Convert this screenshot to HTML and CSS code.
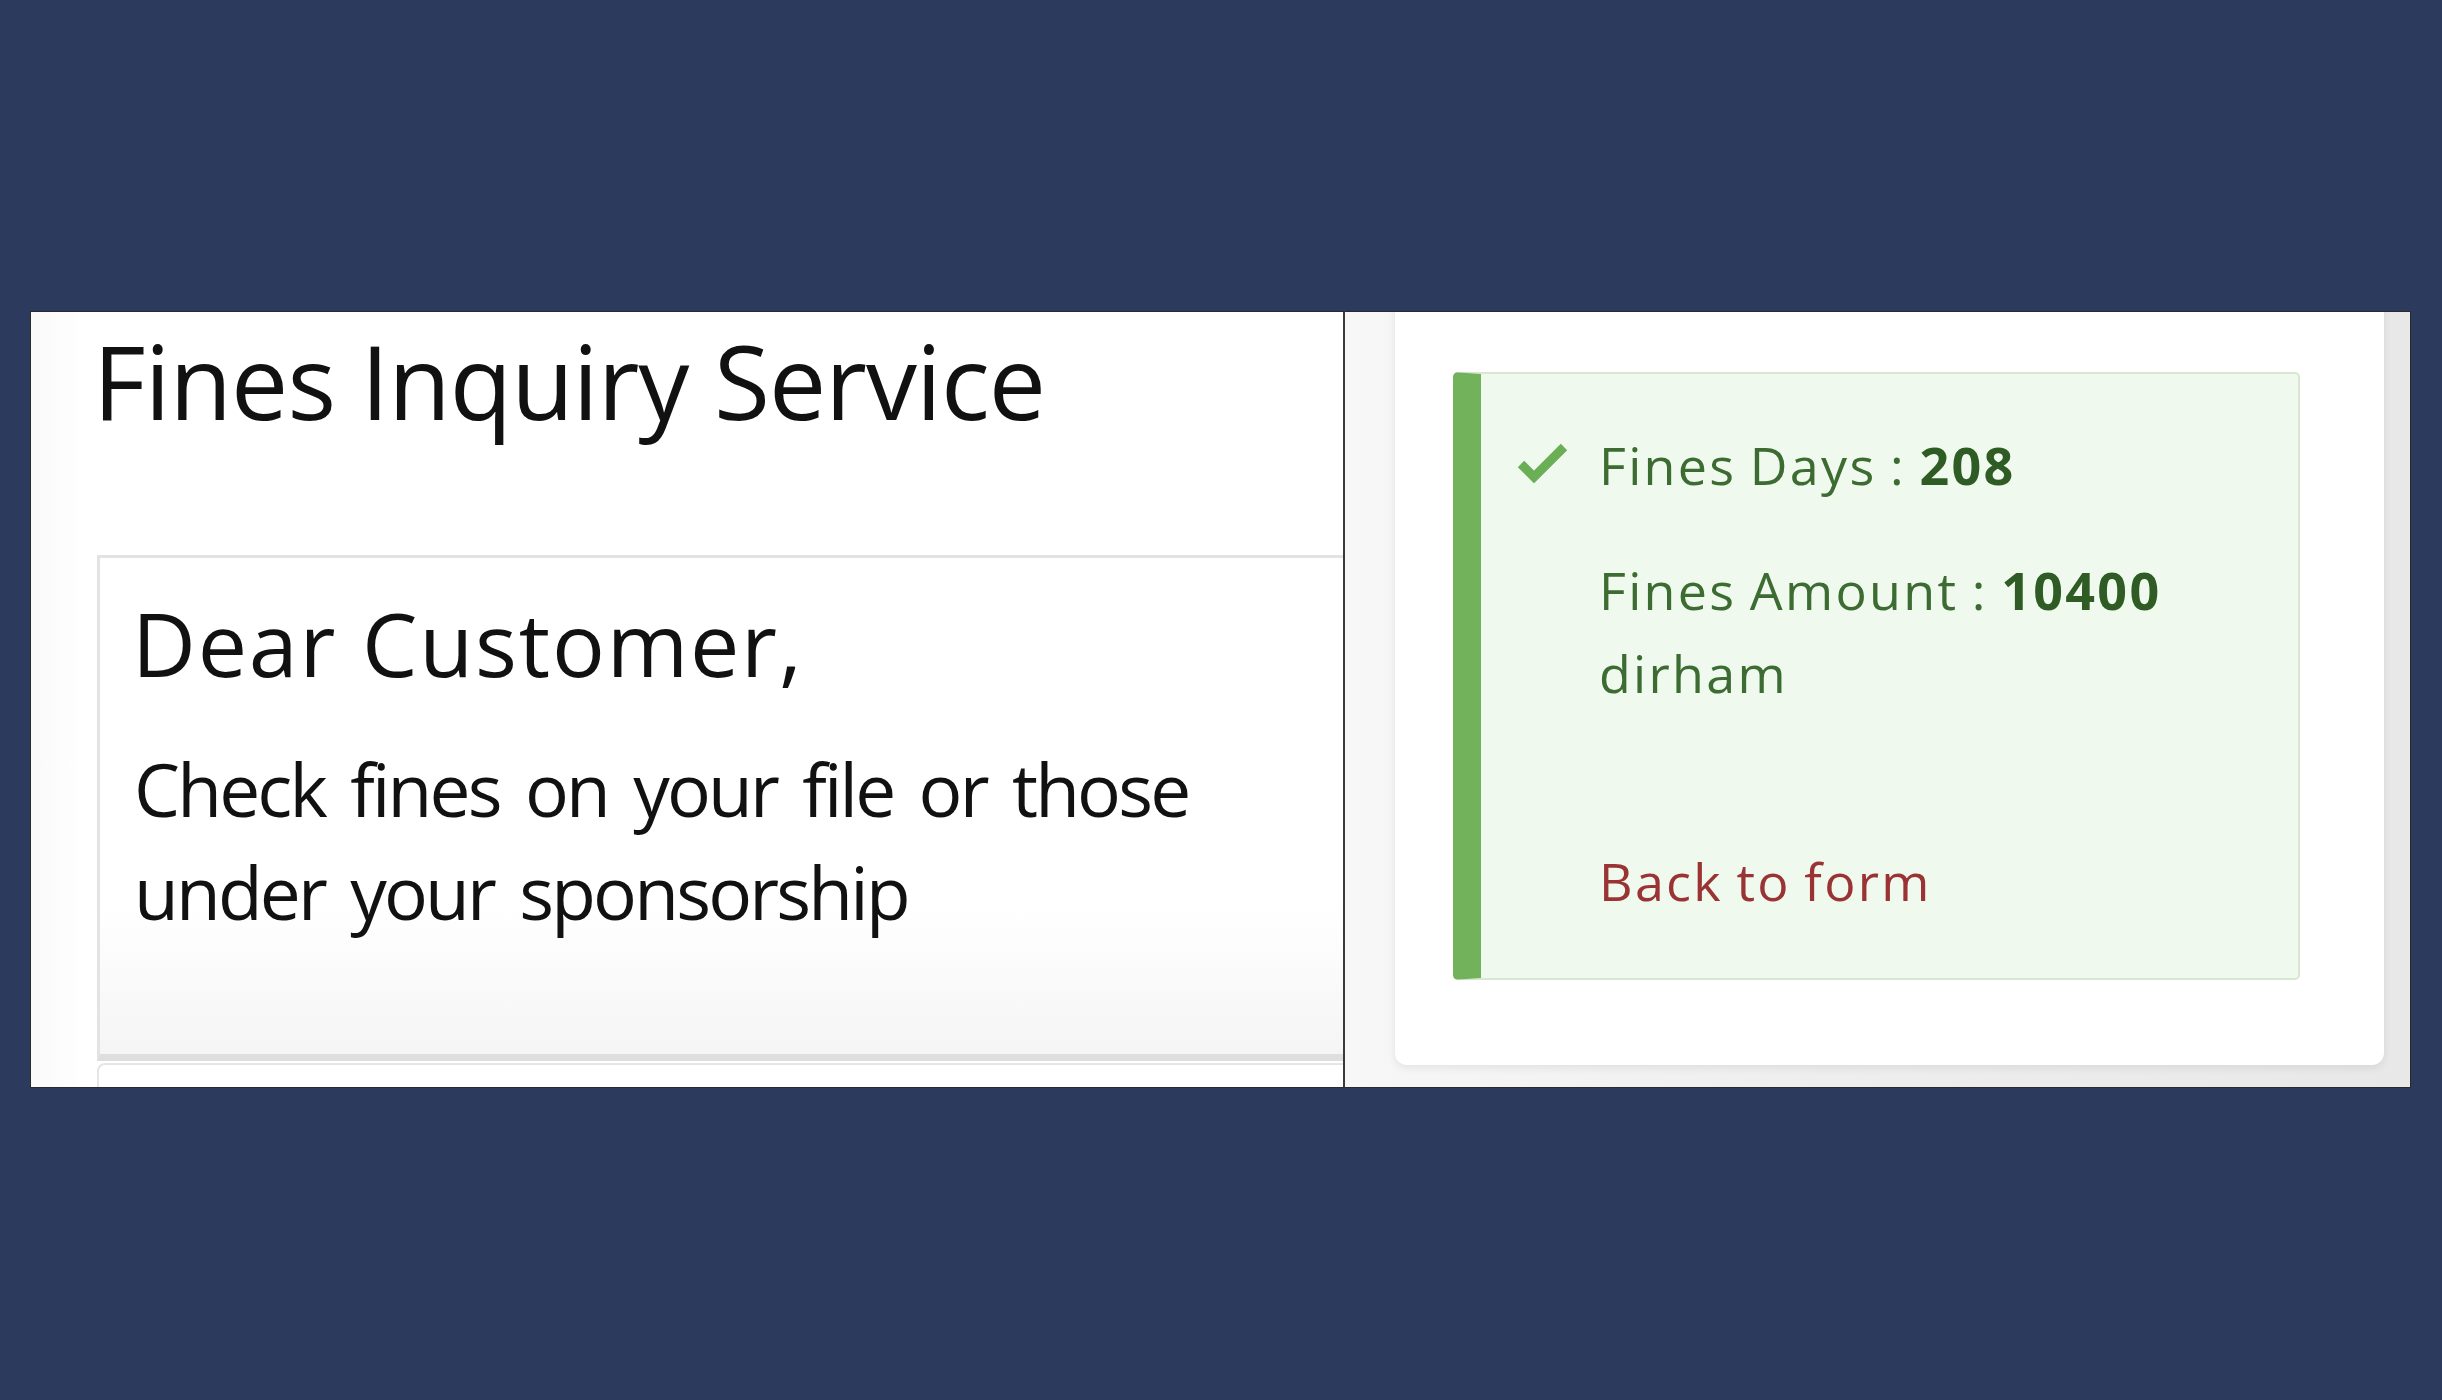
FILE: index.html
```html
<!DOCTYPE html>
<html lang="en">
<head>
<meta charset="utf-8">
<title>Fines Inquiry Service</title>
<link rel="stylesheet" href="styles.css">
</head>
<body>
<div class="stage">
  <section class="shot shot-left">
    <h1 class="title">Fines Inquiry Service</h1>
    <div class="card">
      <h2 class="greet">Dear Customer,</h2>
      <p class="lead">Check fines on your file or those under your sponsorship</p>
    </div>
    <div class="card card-next"></div>
  </section>
  <section class="shot shot-right">
    <div class="result-card">
      <div class="alert">
        <svg class="check" width="52" height="40" viewBox="0 0 52 40" aria-hidden="true">
          <polyline points="4,21 17,34 47,4" fill="none" stroke="#6aae56" stroke-width="9" stroke-linejoin="miter"/>
        </svg>
        <div class="alert-body">
          <p class="line">Fines Days : <b>208</b></p>
          <p class="line line-2">Fines Amount : <b>10400</b> dirham</p>
          <a class="back" href="#">Back to form</a>
        </div>
      </div>
    </div>
  </section>
</div>
</body>
</html>
```

FILE: styles.css
```css
html, body {
  margin: 0;
  padding: 0;
}
body {
  background: #2c3a5d;
  width: 2442px;
  height: 1400px;
  overflow: hidden;
  font-family: "Open Sans", "DejaVu Sans", sans-serif;
}
.stage {
  display: flex;
  padding: 311px 0 0 30px;
}
.shot {
  box-sizing: border-box;
  height: 777px;
  border: 1px solid #2a2a2a;
  overflow: hidden;
}
.shot-left {
  width: 1315px;
  background: linear-gradient(to right, #fafafa 0px, #ffffff 60px);
  display: flex;
  flex-direction: column;
  padding-left: 66px;
  border-right: 2px solid #3a3a3a;
}
.title {
  margin: 8px 0 0 -4px;
  font-size: 102px;
  line-height: 1.2;
  font-weight: 400;
  letter-spacing: -0.95px;
  color: #111111;
  white-space: nowrap;
}
.card {
  flex: 0 0 auto;
  width: 1320px;
  box-sizing: border-box;
  margin-top: 113px;
  border: 3px solid #e3e3e3;
  border-bottom: 7px solid #dedede;
  border-right: none;
  padding: 33px 0 111px 32px;
  background: linear-gradient(to bottom, #ffffff 0%, #ffffff 70%, #f5f5f5 100%);
}
.greet {
  margin: 0;
  font-size: 88px;
  line-height: 1.2;
  font-weight: 400;
  letter-spacing: 1.8px;
  color: #111111;
}
.lead {
  margin: 40px 0 0 2px;
  width: 1100px;
  font-size: 73px;
  line-height: 103px;
  letter-spacing: -2.8px;
  word-spacing: 9px;
  color: #111111;
}
.card-next {
  margin-top: 2px;
  height: 60px;
  padding: 0;
  border: 2px solid #e6e6e6;
  border-right: none;
  border-bottom: none;
  border-top-left-radius: 8px;
  background: #ffffff;
}
.shot-right {
  width: 1066px;
  border-left: none;
  background: linear-gradient(to right, #f7f7f7 0%, #eeeeee 45%, #e8e8e8 100%);
  padding: 0 26px 0 50px;
  display: flex;
  flex-direction: column;
}
.result-card {
  margin-top: -20px;
  height: 773px;
  box-sizing: border-box;
  background: #ffffff;
  border-radius: 12px;
  box-shadow: 0 3px 8px rgba(0, 0, 0, 0.08);
  padding: 80px 84px 0 58px;
}
.alert {
  box-sizing: border-box;
  height: 608px;
  display: flex;
  align-items: flex-start;
  background: #f0f9ee;
  border: 2px solid #d8e6d3;
  border-left: 28px solid #72b25a;
  border-radius: 5px;
  padding: 49px 40px 0 36px;
}
.check {
  flex: 0 0 auto;
  margin-top: 20px;
  margin-right: 30px;
}
.alert-body {
  display: flex;
  flex-direction: column;
  align-items: flex-start;
}
.line {
  margin: 0;
  font-size: 52px;
  line-height: 83px;
  letter-spacing: 2.3px;
  word-spacing: -2.3px;
  color: #3d6c33;
}
.line b {
  font-weight: 700;
  color: #2e5c24;
}
.line-2 {
  margin-top: 42px;
  width: 620px;
}
.back {
  margin-top: 125px;
  font-size: 52px;
  line-height: 83px;
  letter-spacing: 2.3px;
  word-spacing: -2.3px;
  color: #9a3434;
  text-decoration: none;
}
```
